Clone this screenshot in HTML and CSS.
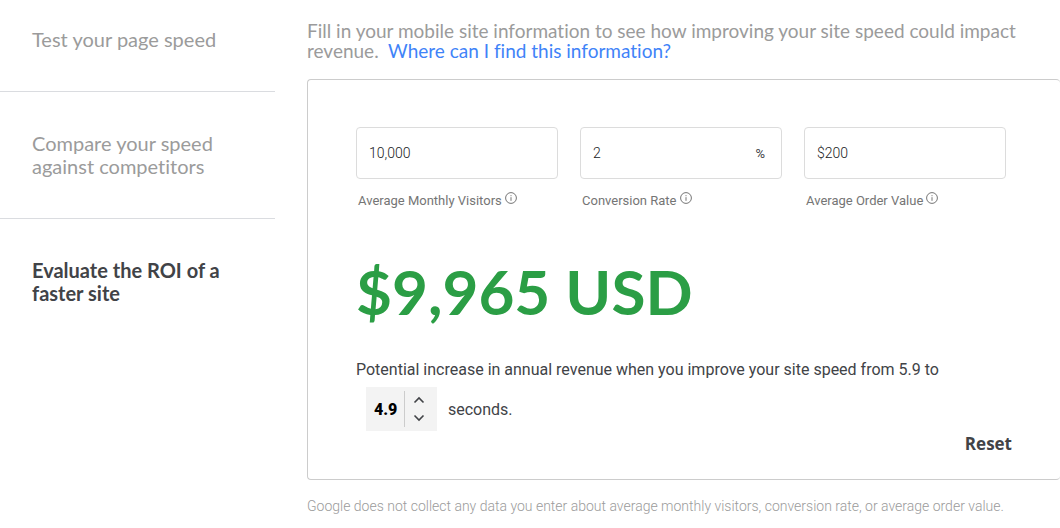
FILE: index.html
```html
<!DOCTYPE html>
<html lang="en">
<head>
  <meta charset="UTF-8">
  <meta name="viewport" content="width=device-width, initial-scale=1.0">
  <title>Evaluate the ROI of a faster site</title>
  <link rel="stylesheet" href="styles.css">
</head>
<body>
  <div class="page">
    <nav class="steps">
      <a class="step" href="#speed">Test your page speed</a>
      <a class="step" href="#compare">Compare your speed against competitors</a>
      <a class="step step--active" href="#roi">Evaluate the ROI of a faster site</a>
    </nav>

    <main class="content">
      <p class="intro">Fill in your mobile site information to see how improving your site speed could impact revenue. &nbsp;<a class="intro-link" href="#help">Where can I find this information?</a></p>

      <form class="card">
        <div class="fields">
          <div class="field">
            <div class="field-box">
              <input class="field-input" id="visitors" type="text" value="10,000">
            </div>
            <div class="field-caption">
              <label for="visitors">Average Monthly Visitors</label>
              <svg class="info" viewBox="0 0 12 12"><circle cx="6" cy="6" r="5.4"/><path d="M6 5.2v3.6M6 3.2v1"/></svg>
            </div>
          </div>
          <div class="field">
            <div class="field-box">
              <input class="field-input" id="rate" type="text" value="2">
              <span class="field-unit">%</span>
            </div>
            <div class="field-caption">
              <label for="rate">Conversion Rate</label>
              <svg class="info" viewBox="0 0 12 12"><circle cx="6" cy="6" r="5.4"/><path d="M6 5.2v3.6M6 3.2v1"/></svg>
            </div>
          </div>
          <div class="field">
            <div class="field-box">
              <input class="field-input" id="order" type="text" value="$200">
            </div>
            <div class="field-caption">
              <label for="order">Average Order Value</label>
              <svg class="info" viewBox="0 0 12 12"><circle cx="6" cy="6" r="5.4"/><path d="M6 5.2v3.6M6 3.2v1"/></svg>
            </div>
          </div>
        </div>

        <p class="revenue">$9,965 USD</p>

        <p class="summary">Potential increase in annual revenue when you improve your site speed from 5.9 to</p>
        <div class="target">
          <div class="stepper">
            <input class="stepper-input" id="seconds" type="text" value="4.9">
            <div class="stepper-buttons">
              <button class="stepper-btn" type="button" aria-label="Increase"><svg viewBox="0 0 12 8"><path d="M1.5 6.5 6 2l4.5 4.5"/></svg></button>
              <button class="stepper-btn" type="button" aria-label="Decrease"><svg viewBox="0 0 12 8"><path d="M1.5 1.5 6 6l4.5-4.5"/></svg></button>
            </div>
          </div>
          <label for="seconds">seconds.</label>
        </div>

        <div class="actions">
          <button class="reset" type="reset">Reset</button>
        </div>
      </form>

      <p class="note">Google does not collect any data you enter about average monthly visitors, conversion rate, or average order value.</p>
    </main>
  </div>
</body>
</html>
```
FILE: styles.css
```css
* {
  box-sizing: border-box;
}

body {
  margin: 0;
  background-color: #fff;
  color: #414347;
  font-family: Roboto, Arial, sans-serif;
}

p {
  margin: 0;
}

.page {
  display: flex;
  gap: 32px;
}

/* Left navigation */
.steps {
  flex: 0 0 275px;
}

.step {
  display: block;
  padding: 40px 32px;
  color: #9b9b9b;
  font-family: "Google Sans", Lato, sans-serif;
  font-size: 20px;
  line-height: 23px;
  font-variant-ligatures: none;
  text-decoration: none;
  border-bottom: 1px solid #dadce0;
}

.step:first-child {
  padding-top: 28px;
}

.step--active {
  color: #414347;
  font-weight: bold;
  border-bottom: none;
}

/* Calculator */
.content {
  flex: 1;
  min-width: 0;
}

.intro {
  padding: 21px 32px 18px 0;
  color: #9b9b9b;
  font-family: "Google Sans", Lato, sans-serif;
  font-size: 19px;
  line-height: 20px;
  font-variant-ligatures: none;
}

.intro-link {
  color: #3f83f8;
  text-decoration: none;
}

.card {
  padding: 47px 48px 22px;
  border: 1px solid #ccc;
  border-right: none;
  border-radius: 4px;
}

.fields {
  display: grid;
  grid-template-columns: repeat(3, minmax(0, 1fr));
  gap: 22px;
  padding-right: 6px;
}

.field-box {
  display: flex;
  align-items: center;
  height: 52px;
  padding: 0 16px 0 12px;
  border: 1px solid #dcdcdc;
  border-radius: 4px;
}

.field-input {
  flex: 1;
  min-width: 0;
  padding: 0;
  border: none;
  background: none;
  color: #202124;
  font-family: inherit;
  font-size: 14px;
  font-weight: 300;
}

.field-unit {
  font-size: 13px;
}

.field-caption {
  display: flex;
  gap: 3px;
  padding: 13px 0 0 2px;
  color: #757575;
  font-size: 13px;
  line-height: 18px;
}

.info {
  width: 12px;
  height: 12px;
  fill: none;
  stroke: #757575;
}

.revenue {
  margin-top: 39px;
  color: #2b9e45;
  font-family: "Google Sans", Lato, sans-serif;
  font-size: 62px;
  font-weight: bold;
  line-height: 84px;
}

.summary {
  margin-top: 25px;
  font-size: 16px;
  line-height: 24px;
}

.target {
  display: flex;
  align-items: center;
  gap: 11px;
  margin-top: 5px;
  padding-left: 10px;
  font-size: 16px;
}

.stepper {
  display: flex;
  align-items: center;
  width: 71px;
  height: 44px;
  background-color: #f3f3f3;
}

.stepper-input {
  width: 38px;
  height: 36px;
  padding: 0 0 0 8px;
  border: none;
  background: none;
  color: #000;
  font-family: inherit;
  font-size: 16px;
  font-weight: 900;
}

.stepper-buttons {
  display: flex;
  flex-direction: column;
  flex: 1;
  height: 36px;
  border-left: 1px solid #ccc;
}

.stepper-btn {
  display: flex;
  align-items: center;
  flex: 1;
  padding: 0 8px;
  border: none;
  background: none;
  cursor: pointer;
}

.stepper-btn svg {
  width: 12px;
  height: 8px;
  fill: none;
  stroke: #414347;
  stroke-width: 1.6;
}

.actions {
  display: flex;
  justify-content: flex-end;
}

.reset {
  padding: 0;
  border: none;
  background: none;
  color: #414347;
  font-family: "Open Sans", sans-serif;
  font-size: 17px;
  font-weight: bold;
  line-height: 26px;
  cursor: pointer;
}

.note {
  padding: 16px 0;
  color: #9b9b9b;
  font-size: 14px;
  font-weight: 300;
  line-height: 20px;
}
```
